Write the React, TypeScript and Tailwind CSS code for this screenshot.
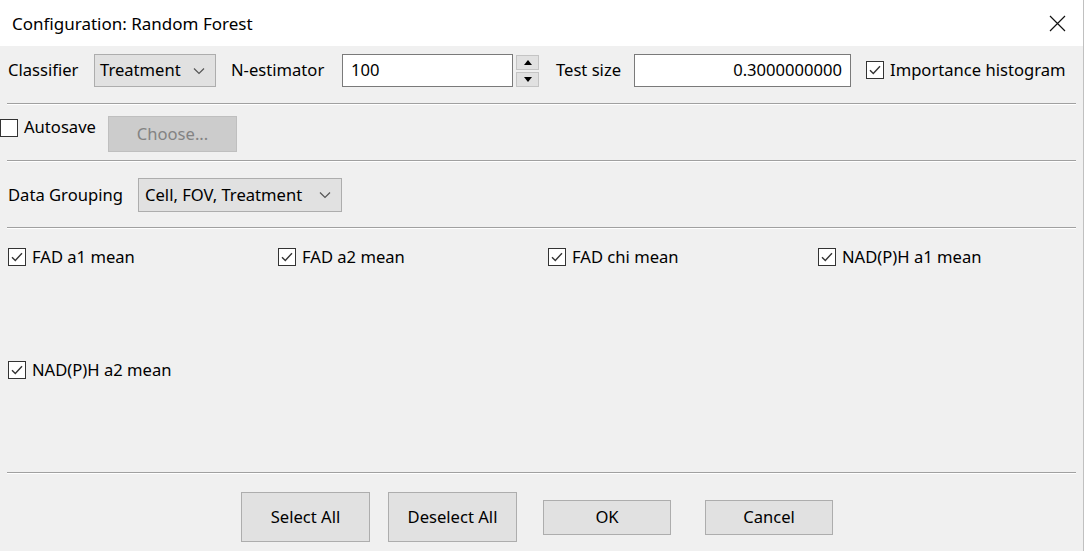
import React from "react";

const font = { fontFamily: '"Noto Sans", "Open Sans", sans-serif' };

function Check({ checked }: { checked: boolean }) {
  return (
    <div className="w-[18px] h-[18px] border border-[#333333] bg-white flex items-center justify-center shrink-0">
      {checked && (
        <svg width="14" height="14" viewBox="0 0 14 14">
          <path d="M2 7.2 L5.3 10.5 L12 3.2" fill="none" stroke="#333" strokeWidth="1.4" />
        </svg>
      )}
    </div>
  );
}

function Chevron() {
  return (
    <svg width="12" height="8" viewBox="0 0 12 8">
      <path d="M1 1.5 L6 6.5 L11 1.5" fill="none" stroke="#555" strokeWidth="1.2" />
    </svg>
  );
}

function Sep() {
  return <div className="mx-[7px] h-[2px] border-t border-[#a0a0a0] border-b border-b-white" />;
}

function Btn({ label, w, h }: { label: string; w: string; h: string }) {
  return (
    <div className={`${w} ${h} border border-[#adadad] bg-[#e1e1e1] flex items-center justify-center text-[16.6px] text-black`}>
      {label}
    </div>
  );
}

export default function App() {
  const items = ["FAD a1 mean", "FAD a2 mean", "FAD chi mean", "NAD(P)H a1 mean", "NAD(P)H a2 mean"];
  return (
    <div className="w-[1084px] h-[551px] flex flex-col bg-[#f0f0f0] text-black overflow-hidden border-r border-[#c0c0c0]" style={font}>
      <div className="h-[46px] bg-white flex items-center justify-between pl-[12px] pr-[17px] shrink-0">
        <span className="text-[17px] leading-none">Configuration: Random Forest</span>
        <svg width="17" height="17" viewBox="0 0 17 17">
          <path d="M1 1 L16 16 M16 1 L1 16" stroke="#111" strokeWidth="1.2" />
        </svg>
      </div>

      <div className="flex flex-col flex-1">
        {/* Row 1 */}
        <div className="flex items-center h-[33px] mt-[8px] pl-[8px] text-[16.6px]">
          <div className="w-[86px]">Classifier</div>
          <div className="w-[122px] h-[33px] border border-[#adadad] bg-[#e1e1e1] flex items-center justify-between pl-[5px] pr-[10px]">
            <span>Treatment</span>
            <Chevron />
          </div>
          <div className="ml-[15px] w-[111px]">N-estimator</div>
          <div className="w-[171px] h-[33px] border border-[#7a7a7a] bg-white flex items-center pl-[8px]">100</div>
          <div className="ml-[3px] w-[23px] h-[32px] flex flex-col justify-between">
            <div className="h-[15px] border border-[#c4c4c4] bg-[#e1e1e1] flex items-center justify-center">
              <svg width="8" height="5" viewBox="0 0 8 5"><path d="M0 5 L4 0 L8 5 Z" fill="#000" /></svg>
            </div>
            <div className="h-[15px] border border-[#c4c4c4] bg-[#e1e1e1] flex items-center justify-center">
              <svg width="8" height="5" viewBox="0 0 8 5"><path d="M0 0 L4 5 L8 0 Z" fill="#000" /></svg>
            </div>
          </div>
          <div className="ml-[17px] w-[78px]">Test size</div>
          <div className="w-[217px] h-[33px] border border-[#7a7a7a] bg-white flex items-center justify-end pr-[8px]">0.3000000000</div>
          <div className="ml-[15px] flex items-center gap-[6px]">
            <Check checked />
            <span>Importance histogram</span>
          </div>
        </div>

        <div className="mt-[16px]"><Sep /></div>

        {/* Row 2 */}
        <div className="flex items-start mt-[11px] h-[36px] text-[16.6px]">
          <div className="flex items-center gap-[6px] mt-[1px] w-[108px]">
            <Check checked={false} />
            <span className="-mt-[2px]">Autosave</span>
          </div>
          <div className="w-[129px] h-[36px] border border-[#bfbfbf] bg-[#cccccc] flex items-center justify-center text-[#838383]">
            Choose...
          </div>
        </div>

        <div className="mt-[8px]"><Sep /></div>

        {/* Row 3 */}
        <div className="flex items-center mt-[16px] h-[34px] pl-[8px] text-[16.6px]">
          <div className="w-[130px]">Data Grouping</div>
          <div className="w-[204px] h-[34px] border border-[#adadad] bg-[#e1e1e1] flex items-center justify-between pl-[6px] pr-[10px]">
            <span>Cell, FOV, Treatment</span>
            <Chevron />
          </div>
        </div>

        <div className="mt-[15px]"><Sep /></div>

        {/* Checkbox grid */}
        <div className="grid grid-cols-[270px_270px_270px_270px] gap-y-[95px] pl-[8px] mt-[19px] text-[16.6px]">
          {items.map((t) => (
            <div key={t} className="flex items-center gap-[6px] h-[18px]">
              <Check checked />
              <span>{t}</span>
            </div>
          ))}
        </div>

        <div className="mt-[93px]"><Sep /></div>

        {/* Buttons */}
        <div className="flex items-center pl-[241px] mt-[18px]">
          <Btn label="Select All" w="w-[129px]" h="h-[50px]" />
          <div className="ml-[18px]"><Btn label="Deselect All" w="w-[129px]" h="h-[50px]" /></div>
          <div className="ml-[26px]"><Btn label="OK" w="w-[128px]" h="h-[35px]" /></div>
          <div className="ml-[34px]"><Btn label="Cancel" w="w-[128px]" h="h-[35px]" /></div>
        </div>
      </div>
    </div>
  );
}
